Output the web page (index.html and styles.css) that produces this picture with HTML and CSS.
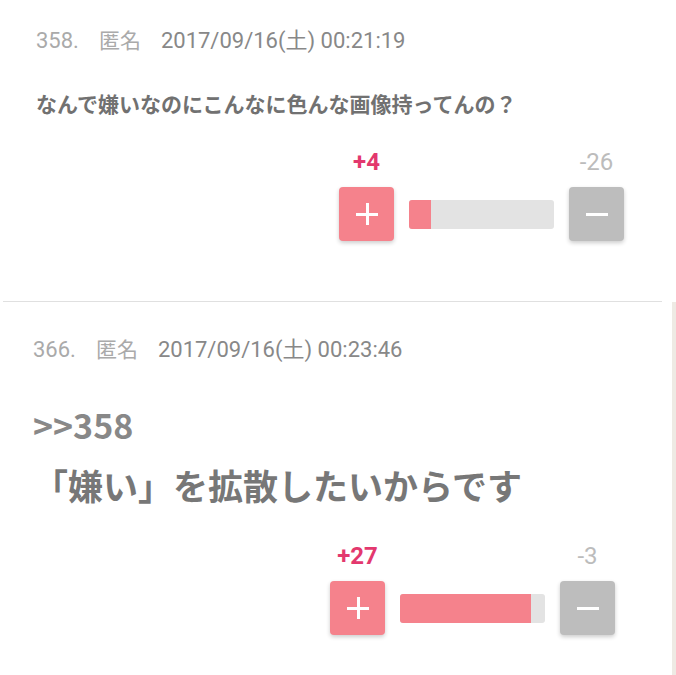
FILE: index.html
```html
<!DOCTYPE html>
<html lang="ja">
<head>
  <meta charset="UTF-8">
  <meta name="viewport" content="width=device-width, initial-scale=1.0">
  <title>コメント</title>
  <link rel="stylesheet" href="styles.css">
</head>
<body>
<div class="post post-first">
  <div class="meta">
    <span class="num">358.</span>
    <span class="name">匿名</span>
    <span class="date">2017/09/16(土) 00:21:19</span>
  </div>
  <p class="body">なんで嫌いなのにこんなに色んな画像持ってんの？</p>
  <div class="vote">
    <span class="vote-plus">+4</span>
    <span class="vote-minus">-26</span>
    <button class="btn btn-plus"><span class="icon-plus"></span></button>
    <div class="bar"><div class="bar-fill" style="width: 15%"></div></div>
    <button class="btn btn-minus"><span class="icon-minus"></span></button>
  </div>
</div>

<div class="divider"></div>

<div class="row-second">
  <div class="post post-second">
    <div class="meta">
      <span class="num">366.</span>
      <span class="name">匿名</span>
      <span class="date">2017/09/16(土) 00:23:46</span>
    </div>
    <p class="anchor">&gt;&gt;358</p>
    <p class="body body-big">「嫌い」を拡散したいからです</p>
    <div class="vote">
      <span class="vote-plus">+27</span>
      <span class="vote-minus">-3</span>
      <button class="btn btn-plus"><span class="icon-plus"></span></button>
      <div class="bar"><div class="bar-fill" style="width: 90%"></div></div>
      <button class="btn btn-minus"><span class="icon-minus"></span></button>
    </div>
  </div>
  <div class="edge"></div>
</div>
</body>
</html>
```

FILE: styles.css
```css
body {
  margin: 0;
  background-color: #fff;
  font-family: Roboto, 'Noto Sans CJK JP', sans-serif;
  color: #777;
}

p {
  margin: 0;
}

.post-first {
  padding: 26px 52px 60px 36px;
}

.meta {
  display: flex;
  gap: 20px;
  font-size: 22px;
  line-height: 30px;
  color: #aaa;
}

.meta .name {
  font-size: 21px;
}

.meta .date {
  color: #888;
}

.body {
  margin-top: 32px;
  font-family: 'Noto Sans CJK JP', sans-serif;
  font-weight: bold;
  font-size: 21px;
  line-height: 30px;
  color: #717171;
}

/* votes */
.vote {
  display: grid;
  grid-template-columns: 55px 145px 55px;
  grid-template-rows: 28px 54px;
  column-gap: 15px;
  row-gap: 11px;
  justify-content: end;
  align-items: center;
  margin-top: 30px;
}

.vote-plus {
  grid-column: 1;
  text-align: center;
  font-weight: bold;
  font-size: 24px;
  color: #e3386e;
}

.vote-minus {
  grid-column: 3;
  text-align: center;
  font-size: 24px;
  color: #bcbcbc;
}

.btn {
  width: 55px;
  height: 54px;
  border: none;
  border-radius: 4px;
  padding: 0;
  display: flex;
  align-items: center;
  justify-content: center;
  box-shadow: 0 2px 4px rgba(0,0,0,0.2);
  cursor: pointer;
}

.btn-plus {
  background-color: #f5828c;
}

.btn-minus {
  background-color: #bdbdbd;
}

.icon-plus {
  position: relative;
  width: 22px;
  height: 22px;
}

.icon-plus::before,
.icon-plus::after {
  content: '';
  position: absolute;
  background-color: #fff;
}

.icon-plus::before {
  left: 0;
  right: 0;
  top: 10px;
  height: 3px;
}

.icon-plus::after {
  top: 0;
  bottom: 0;
  left: 10px;
  width: 3px;
}

.icon-minus {
  width: 22px;
  height: 3px;
  background-color: #fff;
}

.bar {
  height: 29px;
  background-color: #e3e3e3;
  border-radius: 3px;
  overflow: hidden;
}

.bar-fill {
  height: 100%;
  background-color: #f5828c;
}

.divider {
  height: 1px;
  margin: 0 14px 0 3px;
  background-color: #e0e0e0;
}

.row-second {
  display: flex;
}

.post-second {
  flex: 1;
  padding: 33px 57px 40px 33px;
}

.edge {
  width: 4px;
  background-color: #eeeae4;
}

.anchor {
  margin-top: 38px;
  font-family: 'Noto Sans CJK JP', sans-serif;
  font-weight: bold;
  font-size: 34px;
  line-height: 44px;
  color: #888;
}

.body-big {
  margin-top: 14px;
  font-size: 35px;
  line-height: 48px;
  color: #777;
}

.post-second .vote {
  margin-top: 33px;
}
```
